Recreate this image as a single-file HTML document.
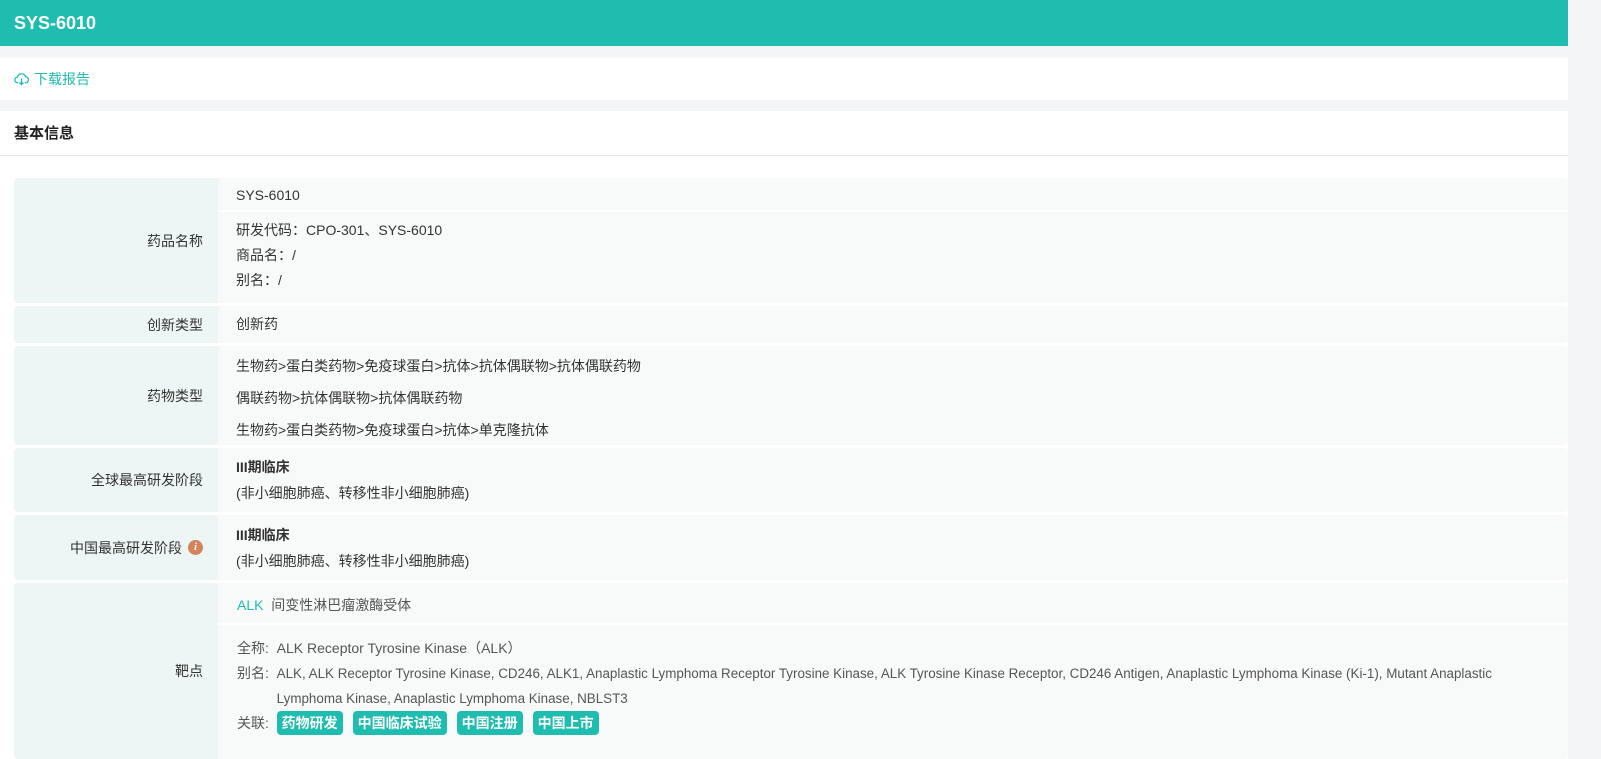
<!DOCTYPE html>
<html><head><meta charset="utf-8"><style>
*{margin:0;padding:0;box-sizing:border-box}
body{width:1601px;height:759px;overflow:hidden;background:#f4f5f7;font-family:"Liberation Sans","Noto Sans CJK SC",sans-serif;color:#333;font-size:14px}
.hd{position:absolute;left:0;top:0;width:1568px;height:46px;background:#1fbcb0;color:#fff;font-weight:bold;font-size:18px;line-height:46px;padding-left:14px}
.dl{position:absolute;left:0;top:58px;width:1568px;height:42px;background:#fff;color:#1fbcb0;line-height:42px;padding-left:14px;font-size:14px}
.sec{position:absolute;left:0;top:111px;width:1568px;height:648px;background:#fff}
.st{height:45px;line-height:45px;padding-left:14px;font-weight:bold;font-size:15px;color:#222;border-bottom:1px solid #e6e6e6}
.row{position:absolute;left:14px;width:1554px;display:flex;border-radius:4px;overflow:hidden}
.lb{width:204px;background:#eef6f5;text-align:right;padding-right:15px;display:flex;align-items:center;justify-content:flex-end}
.vl{flex:1;background:#f8fafa;padding-left:18px}
.tag{display:inline-block;background:#1fbcb0;color:#fff;font-weight:bold;border-radius:4px;padding:0 5px;height:24px;line-height:24px;margin-right:10px}
.g{color:#555}
</style></head><body>
<div class="hd">SYS-6010</div>
<div class="dl"><svg width="15" height="14" viewBox="0 0 16 14" style="vertical-align:-2px;margin-right:5px" fill="none" stroke="#1fbcb0" stroke-width="1.4"><path d="M4.5 11H4a3 3 0 0 1-.3-6A4.5 4.5 0 0 1 12.3 4.5 3.2 3.2 0 0 1 12 11h-.5"/><path d="M8 6.5v6.5M5.8 10.8L8 13l2.2-2.2"/></svg>下载报告</div>
<div class="sec"><div class="st">基本信息</div></div>

<div class="row" style="top:178px;height:125px">
<div class="lb">药品名称</div>
<div class="vl" style="padding-left:0"><div style="height:34px;line-height:34px;padding-left:18px;border-bottom:2px solid #fff">SYS-6010</div>
<div style="padding-left:18px;line-height:25px;padding-top:6px">研发代码：CPO-301、SYS-6010<br>商品名：/<br>别名：/</div></div></div>

<div class="row" style="top:306px;height:37px"><div class="lb">创新类型</div><div class="vl" style="line-height:37px">创新药</div></div>

<div class="row" style="top:346px;height:99px"><div class="lb">药物类型</div><div class="vl" style="line-height:32px;padding-top:4px">生物药&gt;蛋白类药物&gt;免疫球蛋白&gt;抗体&gt;抗体偶联物&gt;抗体偶联药物<br>偶联药物&gt;抗体偶联物&gt;抗体偶联药物<br>生物药&gt;蛋白类药物&gt;免疫球蛋白&gt;抗体&gt;单克隆抗体</div></div>

<div class="row" style="top:448px;height:64px"><div class="lb">全球最高研发阶段</div><div class="vl" style="line-height:26px;padding-top:6px"><b>III期临床</b><br>(非小细胞肺癌、转移性非小细胞肺癌)</div></div>

<div class="row" style="top:515px;height:65px"><div class="lb">中国最高研发阶段<span style="display:inline-block;width:15px;height:15px;border-radius:50%;background:#d4835a;color:#fff;font-size:11px;font-style:italic;font-weight:bold;text-align:center;line-height:15px;margin-left:6px;font-family:'Liberation Serif',serif">i</span></div><div class="vl" style="line-height:26px;padding-top:7px"><b>III期临床</b><br>(非小细胞肺癌、转移性非小细胞肺癌)</div></div>

<div class="row" style="top:583px;height:176px"><div class="lb">靶点</div><div class="vl" style="padding-left:0">
<div style="height:42px;line-height:44px;padding-left:19px;border-bottom:2px solid #fff"><span style="color:#1fbcb0">ALK</span>&nbsp;&nbsp;<span class="g">间变性淋巴瘤激酶受体</span></div>
<div class="g" style="padding-left:19px;padding-top:11px;line-height:25px;padding-right:40px">
<div>全称:&nbsp; ALK Receptor Tyrosine Kinase（ALK）</div>
<div style="display:flex"><span style="white-space:nowrap">别名:&nbsp;&nbsp;</span><span style="font-size:13.4px">ALK, ALK Receptor Tyrosine Kinase, CD246, ALK1, Anaplastic Lymphoma Receptor Tyrosine Kinase, ALK Tyrosine Kinase Receptor, CD246 Antigen, Anaplastic Lymphoma Kinase (Ki-1), Mutant Anaplastic Lymphoma Kinase, Anaplastic Lymphoma Kinase, NBLST3</span></div>
<div>关联:&nbsp; <span class="tag">药物研发</span><span class="tag">中国临床试验</span><span class="tag">中国注册</span><span class="tag">中国上市</span></div>
</div></div></div>
</body></html>
